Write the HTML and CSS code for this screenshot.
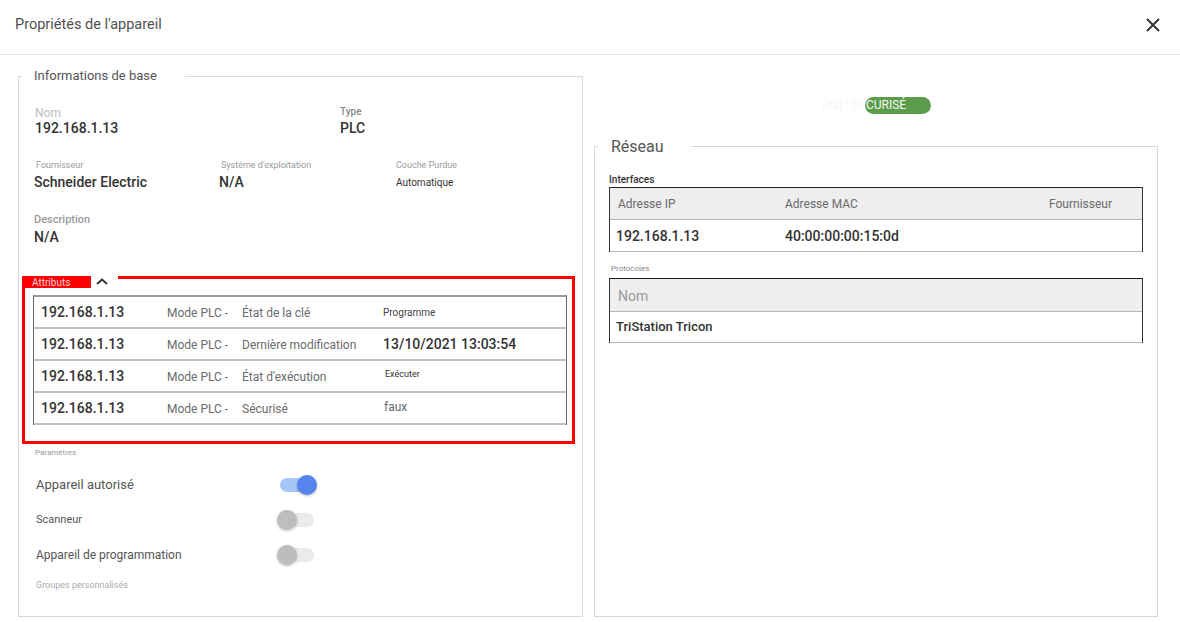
FILE: index.html
```html
<!DOCTYPE html>
<html lang="fr">
<head>
<meta charset="utf-8">
<title>Propriétés de l'appareil</title>
<link rel="stylesheet" href="styles.css">
</head>
<body>
<header class="topbar">
  <h1 class="title">Propriétés de l'appareil</h1>
  <button class="close" type="button" aria-label="Fermer">
    <svg width="14" height="14" viewBox="0 0 14 14"><path d="M1 1L13 13M13 1L1 13" stroke="#333" stroke-width="2" fill="none"/></svg>
  </button>
</header>
<main class="content">
  <fieldset class="panel panel-left">
    <legend class="legend-left">Informations de base</legend>
    <div class="row row-1">
      <div class="field f-nom"><span class="lbl lbl-nom">Nom</span><span class="val">192.168.1.13</span></div>
      <div class="field"><span class="lbl lbl-type">Type</span><span class="val">PLC</span></div>
    </div>
    <div class="row row-2">
      <div class="field f-four"><span class="lbl lbl-small">Fournisseur</span><span class="val">Schneider Electric</span></div>
      <div class="field f-os"><span class="lbl lbl-small">Système d'exploitation</span><span class="val val-os">N/A</span></div>
      <div class="field"><span class="lbl lbl-small">Couche Purdue</span><span class="val val-tiny">Automatique</span></div>
    </div>
    <div class="row row-3">
      <div class="field"><span class="lbl lbl-desc">Description</span><span class="val">N/A</span></div>
    </div>

    <section class="attrs">
      <div class="attrs-head">
        <span class="attrs-label">Attributs</span>
        <span class="attrs-toggle"><svg width="12" height="7" viewBox="0 0 12 7"><path d="M1 6L6 1.5L11 6" stroke="#333" stroke-width="2" fill="none"/></svg></span>
      </div>
      <div class="attr-table">
        <div class="attr-row"><span class="a-ip">192.168.1.13</span><span class="a-mode">Mode PLC -</span><span class="a-name">État de la clé</span><span class="a-val v-small">Programme</span></div>
        <div class="attr-row"><span class="a-ip">192.168.1.13</span><span class="a-mode">Mode PLC -</span><span class="a-name">Dernière modification</span><span class="a-val v-bold">13/10/2021 13:03:54</span></div>
        <div class="attr-row"><span class="a-ip">192.168.1.13</span><span class="a-mode">Mode PLC -</span><span class="a-name">État d'exécution</span><span class="a-val v-tiny">Exécuter</span></div>
        <div class="attr-row"><span class="a-ip">192.168.1.13</span><span class="a-mode">Mode PLC -</span><span class="a-name">Sécurisé</span><span class="a-val v-light">faux</span></div>
      </div>
    </section>

    <div class="params-label">Paramètres</div>
    <div class="toggle-row">
      <span class="t-label t-l1">Appareil autorisé</span>
      <span class="switch on"><span class="knob"></span></span>
    </div>
    <div class="toggle-row">
      <span class="t-label t-l2">Scanneur</span>
      <span class="switch"><span class="knob"></span></span>
    </div>
    <div class="toggle-row">
      <span class="t-label t-l3">Appareil de programmation</span>
      <span class="switch"><span class="knob"></span></span>
    </div>
    <div class="groups-label">Groupes personnalisés</div>
  </fieldset>

  <div class="col-right">
    <div class="status"><span class="status-text">État : SÉCURISÉ</span></div>
    <fieldset class="panel panel-right">
      <legend class="legend-right">Réseau</legend>
      <div class="sub-title">Interfaces</div>
      <div class="tbl">
        <div class="tbl-head cols-3"><span>Adresse IP</span><span>Adresse MAC</span><span class="c-vendor">Fournisseur</span></div>
        <div class="tbl-row cols-3"><span>192.168.1.13</span><span>40:00:00:00:15:0d</span><span></span></div>
      </div>
      <div class="sub-small">Protocoles</div>
      <div class="tbl tbl-proto">
        <div class="tbl-head head-big"><span>Nom</span></div>
        <div class="tbl-row row-proto"><span>TriStation Tricon</span></div>
      </div>
    </fieldset>
  </div>
</main>
</body>
</html>
```

FILE: styles.css
```css
* { box-sizing: border-box; }
html, body { margin: 0; padding: 0; }
body {
  width: 1180px;
  height: 622px;
  background: #fff;
  font-family: Roboto, "Liberation Sans", Arial, sans-serif;
  color: #333;
  overflow: hidden;
}

.topbar {
  height: 55px;
  border-bottom: 1px solid #e6e6e6;
  display: flex;
  align-items: center;
  justify-content: space-between;
  padding: 0 20px 0 15px;
}
.title {
  margin: 0;
  font-size: 14.5px;
  font-weight: 400;
  color: #505050;
  line-height: 18px;
  padding-bottom: 4px;
}
.close {
  border: 0;
  background: transparent;
  padding: 0;
  width: 14px;
  height: 14px;
  display: flex;
  margin-bottom: 4px;
}

.content {
  display: flex;
  gap: 11px;
  padding: 13px 22px 5px 18px;
  height: 567px;
}

.panel {
  margin: 0;
  border: 1px solid #d9d9d9;
  min-width: 0;
}
.panel-left {
  width: 565px;
  padding: 22px 15px 0 15px;
}
.legend-left {
  margin-left: -12px;
  padding: 0 28px 0 12px;
  font-size: 13px;
  line-height: 16px;
  color: #555;
}

.row { display: flex; }
.field { display: flex; flex-direction: column; }
.lbl { display: block; }
.val {
  font-size: 14px;
  line-height: 17px;
  font-weight: 500;
  color: #333;
}
.row-1 { padding-left: 1px; }
.f-nom { width: 305px; }
.lbl-nom { font-size: 12px; line-height: 14px; color: #bdbdbd; }
.lbl-type { font-size: 10px; line-height: 12px; font-weight: 500; color: #888; margin-bottom: 2px; }

.row-2 { margin-top: 22px; padding-left: 0; }
.lbl-small { font-size: 9px; line-height: 12px; color: #9a9a9a; margin-bottom: 3px; }
.f-four { width: 187px; }
.f-four .lbl-small { padding-left: 2px; }
.f-os { width: 175px; }
.val-os { margin-left: -2px; }
.val-tiny { font-size: 10px; font-weight: 400; color: #333; }

.row-3 { margin-top: 22px; }
.lbl-desc { font-size: 11px; line-height: 13px; font-weight: 500; color: #9a9a9a; margin-bottom: 3px; }

.attrs {
  margin: 30px -8px 0 -12px;
  border: 3px solid #ff0000;
  padding: 0 5px 16px 8px;
}
.attrs-head {
  display: flex;
  height: 12px;
  margin: -3px 0 0 -11px;
}
.attrs-label {
  background: #ff0000;
  width: 69px;
  height: 12px;
  font-size: 10px;
  line-height: 14px;
  color: #f3d5d5;
  padding-left: 10px;
  overflow: hidden;
}
.attrs-toggle {
  background: #fff;
  width: 27px;
  height: 14px;
  display: flex;
  align-items: flex-start;
  padding: 2px 0 0 5px;
}
.attr-table {
  margin-top: 7px;
  border-top: 2px solid #9a9a9a;
  border-left: 1px solid #666;
  border-right: 1px solid #666;
}
.attr-row {
  display: grid;
  grid-template-columns: 126px 75px 141px 1fr;
  align-items: center;
  height: 32px;
  padding-left: 7px;
  border-bottom: 2px solid #c2c2c2;
}
.a-ip { font-size: 14px; font-weight: 500; color: #333; }
.a-mode, .a-name { font-size: 12px; color: #6a6a6a; padding-top: 1px; }
.a-val { color: #333; }
.v-small { font-size: 10px; color: #444; }
.v-bold { font-size: 14px; font-weight: 500; color: #333; }
.v-tiny { font-size: 9px; color: #333; margin-top: -5px; padding-left: 2px; }
.v-light { font-size: 12px; color: #6a6a6a; margin-top: -3px; padding-left: 1px; }

.params-label {
  margin-top: 4px;
  padding-left: 1px;
  font-size: 8px;
  line-height: 10px;
  color: #9a9a9a;
}
.toggle-row {
  display: flex;
  align-items: center;
  height: 35px;
}
.params-label + .toggle-row { margin-top: 9px; }
.t-label { width: 246px; padding-left: 2px; color: #555; }
.t-l1 { font-size: 13px; }
.t-l2 { font-size: 11px; }
.t-l3 { font-size: 12px; }
.switch {
  position: relative;
  width: 34px;
  height: 14px;
  border-radius: 7px;
  background: #ebebeb;
}
.switch .knob {
  position: absolute;
  top: -3px;
  left: -3px;
  width: 20px;
  height: 20px;
  border-radius: 50%;
  background: #bdbdbd;
  box-shadow: 0 1px 3px rgba(0,0,0,0.25);
}
.switch.on { background: #a4c7f7; width: 31px; }
.switch.on .knob { left: auto; right: -6px; background: #5484ec; }

.groups-label {
  margin-top: 8px;
  padding-left: 2px;
  font-size: 9px;
  line-height: 11px;
  color: #aaa;
}

.col-right {
  width: 564px;
  display: flex;
  flex-direction: column;
}
.status {
  margin-top: 29px;
  height: 17px;
  display: flex;
  justify-content: center;
  padding-right: 24px;
}
.status-text {
  position: relative;
  z-index: 0;
  font-size: 12px;
  line-height: 17px;
  color: #f6f6f6;
  white-space: nowrap;
}
.status-text::before {
  content: "";
  position: absolute;
  z-index: -1;
  left: 43px;
  top: 0;
  width: 66px;
  height: 17px;
  border-radius: 9px;
  background: #5b9d4b;
}
.panel-right {
  margin-top: 23px;
  flex: 1;
  padding: 18px 14px 0 14px;
}
.legend-right {
  margin-left: -11px;
  padding: 0 27px 0 13px;
  font-size: 16px;
  line-height: 19px;
  color: #555;
}
.sub-title {
  font-size: 10px;
  line-height: 12px;
  font-weight: 500;
  color: #333;
}
.tbl {
  margin-top: 1px;
  border-top: 1px solid #222;
  border-left: 1px solid #333;
  border-right: 1px solid #333;
}
.tbl-head {
  height: 32px;
  background: #eeeeee;
  border-bottom: 1px solid #b8b8b8;
  align-items: center;
  font-size: 12px;
  color: #6a6a6a;
}
.tbl-head span { padding-left: 8px; }
.tbl-row {
  height: 32px;
  border-bottom: 1px solid #b8b8b8;
  align-items: center;
  font-size: 14px;
  font-weight: 500;
  color: #333;
}
.tbl-row span:first-child { padding-left: 6px; }
.cols-3 {
  display: grid;
  grid-template-columns: 175px 264px 1fr;
}
.cols-3 span:nth-child(2) { padding-left: 0; }
.c-vendor { padding-left: 0 !important; }
.sub-small {
  margin-top: 12px;
  padding-left: 2px;
  font-size: 8px;
  line-height: 10px;
  color: #888;
}
.tbl-proto { margin-top: 4px; }
.head-big {
  display: flex;
  height: 33px;
  font-size: 14px;
  color: #9a9a9a;
  padding-top: 1px;
}
.row-proto {
  display: flex;
  height: 31px;
  font-size: 13px;
  padding-bottom: 1px;
}
```
